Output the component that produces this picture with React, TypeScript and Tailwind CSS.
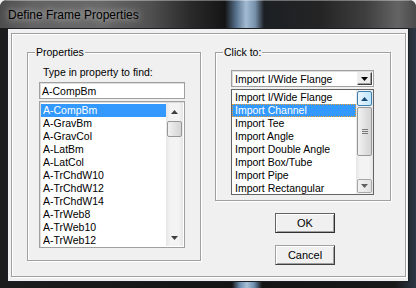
import React from "react";

const properties = [
  "A-CompBm",
  "A-GravBm",
  "A-GravCol",
  "A-LatBm",
  "A-LatCol",
  "A-TrChdW10",
  "A-TrChdW12",
  "A-TrChdW14",
  "A-TrWeb8",
  "A-TrWeb10",
  "A-TrWeb12",
];

const imports = [
  "Import I/Wide Flange",
  "Import Channel",
  "Import Tee",
  "Import Angle",
  "Import Double Angle",
  "Import Box/Tube",
  "Import Pipe",
  "Import Rectangular",
];

function Arrow({ up, color = "#404040" }: { up?: boolean; color?: string }) {
  return (
    <svg width="7" height="4" viewBox="0 0 7 4">
      <path d={up ? "M3.5 0L7 4H0z" : "M0 0h7L3.5 4z"} fill={color} />
    </svg>
  );
}

function Group({ title, className, children }: { title: string; className: string; children: React.ReactNode }) {
  return (
    <div className={`relative border border-[#a0a0a0] shadow-[inset_1px_1px_0_#fff,1px_1px_0_#fff] ${className}`}>
      <span className="absolute -top-[7px] left-[7px] bg-[#f0f0f0] px-[1px] leading-[13px]">{title}</span>
      {children}
    </div>
  );
}

export default function App() {
  return (
    <div className="w-[416px] h-[288px] overflow-hidden bg-[#f0f0f0] font-['Liberation_Sans',Arial,sans-serif] text-[10.5px] text-black">
      <div className="w-full h-full rounded-t-[7px] overflow-hidden bg-[linear-gradient(90deg,#1c1c1c_0px,#141414_232px,#6f8fb0_240px,#a9c0d6_247px,#6f8fb0_254px,#141414_262px,#181818_395px,#2d3845_416px)]">
        {/* title bar */}
        <div className="h-[28px] flex items-center pl-[8px] text-[12px] bg-[linear-gradient(90deg,#4c4c4c_0px,#626262_30px,#686868_100px,#505050_150px,#2a2a2a_190px,#151515_225px,#55708c_236px,#a3bbd2_246px,#7892ad_255px,#1c2024_264px,#242424_320px,#3e3e3e_365px,#646464_398px,#4a4a4a_416px)] shadow-[inset_0_1px_0_rgba(255,255,255,0.35)]">
          <span className="pt-[1px] [text-shadow:0_0_6px_rgba(255,255,255,0.6),0_0_12px_rgba(255,255,255,0.45)]">
            Define Frame Properties
          </span>
        </div>

        {/* client area */}
        <div className="mx-[7px] h-[254px] border border-[#1b1f24] bg-[#f0f0f0] pl-[3px] pt-[4px]">
          <div className="w-[395px] h-[244px] border border-[#a0a0a0] shadow-[inset_1px_1px_0_#fff,1px_1px_0_#fff] flex gap-[14px] pl-[15px] pt-[18px]">
            {/* Properties */}
            <Group title="Properties" className="w-[174px] h-[209px]">
              <div className="pl-[11px]">
                <div className="mt-[13px] pl-[4px] leading-[13px]">Type in property to find:</div>
                <div className="mt-[3px] w-[146px] h-[17px] border border-[#a0a0a0] shadow-[inset_1px_1px_0_#dcdcdc] bg-white pl-[2px] leading-[13px] pt-[2px]">
                  A-CompBm
                </div>
                <div className="mt-[2px] w-[146px] h-[147px] border border-[#a0a0a0] shadow-[inset_1px_1px_0_#dcdcdc] bg-white p-[1px] flex">
                  <div className="w-[125px] pt-[1px]">
                    {properties.map((p, i) => (
                      <div
                        key={p}
                        className={`h-[13px] leading-[13px] pl-[2px] ${i === 0 ? "bg-[#3399ff] text-white" : ""}`}
                      >
                        {p}
                      </div>
                    ))}
                  </div>
                  <div className="w-[17px] flex flex-col items-center bg-[linear-gradient(90deg,#e6e6e6,#f3f3f3_25%,#f3f3f3_75%,#e6e6e6)]">
                    <div className="h-[17px] flex items-center justify-center">
                      <Arrow up />
                    </div>
                    <div className="mt-[1px] w-[15px] h-[16px] rounded-[2px] border border-[#979797] bg-[linear-gradient(90deg,#f2f2f2,#e2e2e2_50%,#d4d4d4)]" />
                    <div className="flex-1" />
                    <div className="h-[17px] flex items-center justify-center">
                      <Arrow />
                    </div>
                  </div>
                </div>
              </div>
            </Group>

            {/* Click to */}
            <div className="flex flex-col">
              <Group title="Click to:" className="w-[176px] h-[149px]">
                <div className="pl-[15px]">
                  <div className="mt-[17px] w-[143px] h-[17px] border border-[#a0a0a0] shadow-[inset_1px_1px_0_#dcdcdc] bg-white flex items-center">
                    <span className="flex-1 pl-[3px] pt-[1px] leading-[13px]">Import I/Wide Flange</span>
                    <div className="w-[15px] h-[13px] mr-[1px] flex items-center justify-center border border-[#f0f0f0] border-r-[#404040] border-b-[#404040] bg-[#ececec] shadow-[inset_-1px_-1px_0_#a0a0a0]">
                      <Arrow color="#000" />
                    </div>
                  </div>
                  <div className="mt-[2px] w-[143px] h-[106px] border border-[#646464] bg-white flex overflow-hidden">
                    <div className="w-[124px] pt-[1px]">
                      {imports.map((p, i) => (
                        <div
                          key={p}
                          className={`h-[13px] leading-[13px] pl-[3px] ${
                            i === 1
                              ? "bg-[#3399ff] text-white outline outline-1 outline-dotted outline-[#f0a030] -outline-offset-1"
                              : ""
                          }`}
                        >
                          {p}
                        </div>
                      ))}
                    </div>
                    <div className="w-[17px] flex flex-col items-center bg-[linear-gradient(90deg,#e6e6e6,#f3f3f3_25%,#f3f3f3_75%,#e6e6e6)]">
                      <div className="mt-[1px] w-[15px] h-[15px] rounded-[2px] border border-[#3c7fb1] bg-[linear-gradient(90deg,#eaf6fd,#bee6fd)] flex items-center justify-center">
                        <Arrow up color="#1b4a78" />
                      </div>
                      <div className="mt-[1px] w-[15px] h-[49px] rounded-[2px] border border-[#979797] bg-[linear-gradient(90deg,#f2f2f2,#e2e2e2_50%,#d4d4d4)] flex flex-col items-center justify-center gap-[1px]">
                        <div className="w-[6px] h-[1px] bg-[#7a7a7a]" />
                        <div className="w-[6px] h-[1px] bg-[#7a7a7a]" />
                        <div className="w-[6px] h-[1px] bg-[#7a7a7a]" />
                      </div>
                      <div className="flex-1" />
                      <div className="mb-[1px] w-[15px] h-[14px] rounded-[2px] border border-[#a8a8a8] bg-[linear-gradient(90deg,#f2f2f2,#e2e2e2)] flex items-center justify-center">
                        <Arrow color="#606060" />
                      </div>
                    </div>
                  </div>
                </div>
              </Group>

              <div className="ml-[60px] mt-[12px] flex flex-col gap-[12px]">
                <button className="w-[60px] h-[20px] border border-[#646464] border-r-[#303030] border-b-[#303030] bg-[#f0f0f0] shadow-[inset_1px_1px_0_#fff,inset_-1px_-1px_0_#a0a0a0] text-[11px] leading-[13px]">
                  OK
                </button>
                <button className="w-[60px] h-[20px] border border-[#a0a0a0] border-r-[#404040] border-b-[#404040] bg-[#f0f0f0] shadow-[inset_1px_1px_0_#fff,inset_-1px_-1px_0_#a0a0a0] text-[11px] leading-[13px]">
                  Cancel
                </button>
              </div>
            </div>
          </div>
        </div>
      </div>
    </div>
  );
}
